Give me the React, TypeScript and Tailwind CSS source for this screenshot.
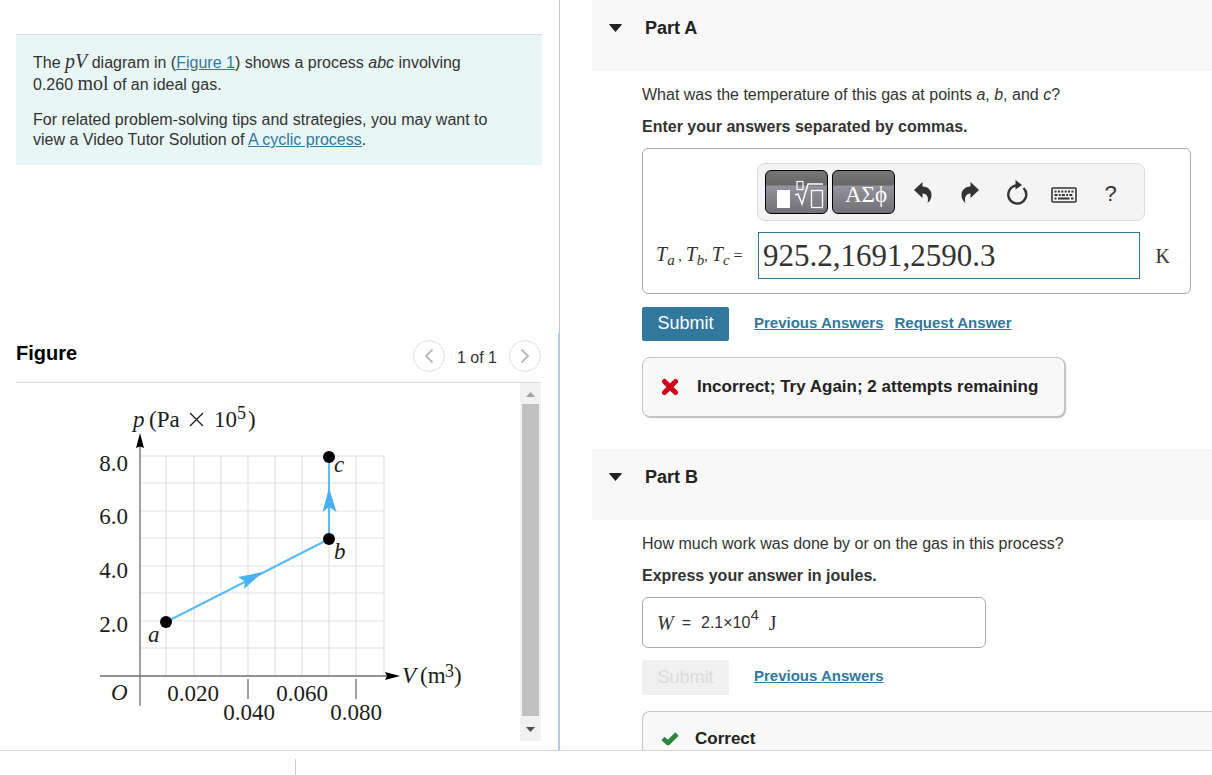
import React, { useState } from "react";
import { ChevronLeft, ChevronRight } from "lucide-react";

const gridX = [86, 114, 141, 168, 195, 222, 249, 276, 304];
const gridY = [66, 93, 121, 148, 176, 203, 231, 258];

const yLabels = [
  { text: "8.0", y: 81 },
  { text: "6.0", y: 134 },
  { text: "4.0", y: 188 },
  { text: "2.0", y: 242 },
];

const xLabels = [
  { text: "0.020", x: 113, y: 311 },
  { text: "0.040", x: 169, y: 330 },
  { text: "0.060", x: 222, y: 311 },
  { text: "0.080", x: 276, y: 330 },
];

function PvDiagram() {
  return (
    <svg
      width="400"
      height="350"
      viewBox="0 0 400 350"
      role="img"
      aria-label="pV diagram of process abc"
      className="block shrink-0 font-['Liberation_Serif',serif] text-[23px]"
      fill="#1c1c1c"
    >
      <g stroke="#e2e2e2" strokeWidth="1.2">
        {gridX.map((x) => (
          <line key={x} x1={x} x2={x} y1="66" y2="286" />
        ))}
        {gridY.map((y) => (
          <line key={y} x1="60" x2="304" y1={y} y2={y} />
        ))}
      </g>

      {/* axes */}
      <g stroke="#6e6e6e" strokeWidth="1.3">
        <line x1="60" x2="60" y1="50" y2="316" />
        <line x1="20" x2="308" y1="286" y2="286" />
        <line x1="168" x2="168" y1="289" y2="309" />
        <line x1="276" x2="276" y1="289" y2="309" />
      </g>
      <path d="M60 43 L64 58 L60 56.5 L56 58 Z" fill="#000" />
      <path d="M320 286 L305 290 L307 286 L305 282 Z" fill="#000" />

      {/* process a -> b -> c */}
      <polyline points="86,232 249,149 249,67" fill="none" stroke="#5bbdf2" strokeWidth="2.2" />
      <path d="M183 182 L164 199 L165 191.5 L158 187 Z" fill="#48b0ee" />
      <path d="M249 98 L256.5 122 L249 117 L242.5 122 Z" fill="#48b0ee" />
      <circle cx="86" cy="232" r="6" fill="#000" />
      <circle cx="249" cy="149" r="6" fill="#000" />
      <circle cx="249" cy="67" r="6" fill="#000" />

      {yLabels.map((l) => (
        <text key={l.text} x="48" y={l.y} textAnchor="end">{l.text}</text>
      ))}
      {xLabels.map((l) => (
        <text key={l.text} x={l.x} y={l.y} textAnchor="middle">{l.text}</text>
      ))}
      <g fontStyle="italic">
        <text x="53" y="37">p</text>
        <text x="68" y="252">a</text>
        <text x="254" y="169">b</text>
        <text x="254" y="82">c</text>
        <text x="31" y="310">O</text>
        <text x="322" y="293">V</text>
      </g>
      <text x="69" y="37">(Pa</text>
      <path d="M110 23 L123 36 M123 23 L110 36" stroke="#1c1c1c" strokeWidth="1.3" />
      <text x="134" y="37">10</text>
      <text x="157" y="29" fontSize="18">5</text>
      <text x="168" y="37">)</text>
      <text x="340" y="293">(m</text>
      <text x="365" y="287" fontSize="18">3</text>
      <text x="374" y="293">)</text>
    </svg>
  );
}

function UndoIcon({ flip = false }: { flip?: boolean }) {
  return (
    <svg width="18" height="21" viewBox="0 0 18 21" className={flip ? "-scale-x-100" : ""} fill="#333">
      <path d="M0 8 L8.5 0 V4.5 C14.5 4.7 17.5 8.5 17.5 13 C17.5 16.5 16 19 13.5 21 C14.8 16 13.5 11.5 8.5 11.5 V16 Z" />
    </svg>
  );
}

function ResetIcon() {
  return (
    <svg width="22" height="25" viewBox="0 0 22 25">
      <path d="M11 5.5 A9 9 0 1 0 17.5 8" fill="none" stroke="#333" strokeWidth="2.4" />
      <path d="M9.5 0 L16 5 L9.5 9.5 Z" fill="#333" />
    </svg>
  );
}

function KeyboardIcon() {
  return (
    <svg width="26" height="16" viewBox="0 0 26 16" fill="none" stroke="#333">
      <rect x="1" y="1" width="24" height="14" rx="1" strokeWidth="1.6" />
      <path d="M3.5 4.5 H22.5" strokeWidth="2" strokeDasharray="2 1.4" />
      <path d="M3.5 8 H22.5" strokeWidth="2" strokeDasharray="3 1.3 1.8 1.3" />
      <path d="M3.5 11.5 H5.500 M7 11.5 H18.5 M20 11.5 H22.5" strokeWidth="2" />
    </svg>
  );
}

function TemplatesIcon() {
  return (
    <svg width="48" height="30" viewBox="0 0 48 30" fill="none" stroke="#fff">
      <rect x="1" y="10" width="13" height="18" fill="#fff" stroke="none" />
      <rect x="21" y="1.5" width="6" height="8" strokeWidth="1.2" />
      <path d="M19 15 L22 14 L26 24 L32 4 H47" strokeWidth="1.5" />
      <rect x="35.5" y="10.5" width="11" height="17" strokeWidth="1.3" />
    </svg>
  );
}

function PartHeader({ title, open, onToggle }: { title: string; open: boolean; onToggle: () => void }) {
  return (
    <header className="h-[71px] bg-[#f8f8f8] pl-4 pt-4">
      <button
        type="button"
        aria-expanded={open}
        onClick={onToggle}
        className="flex items-center gap-[22px] text-[18px] leading-6 font-bold text-[#222]"
      >
        <svg width="15" height="8" viewBox="0 0 15 8" fill="#222" className={open ? "" : "-rotate-90"}>
          <path d="M1 0.5 Q1 0 2 0 H13 Q14 0 14 0.5 L7.5 8 Z" />
        </svg>
        {title}
      </button>
    </header>
  );
}

const linkClass = "pb-[2px] text-[15px] font-bold text-[#32789c] underline";
const mathClass = "font-['Liberation_Serif',serif] text-[20px] leading-none";
const toolClass = "flex h-8 w-[47px] items-center justify-center";
const darkToolClass =
  "flex h-[44px] w-[63px] items-center justify-end rounded-md border border-black bg-[linear-gradient(#767676_0%,#666_34%,#94929c_35%,#727176_100%)] text-white";

export default function App() {
  const [openA, setOpenA] = useState(true);
  const [openB, setOpenB] = useState(true);
  const [answer, setAnswer] = useState("925.2,1691,2590.3");

  return (
    <div className="flex h-screen flex-col overflow-hidden bg-white font-['Liberation_Sans',Arial,sans-serif] text-[16px] text-[#333]">
      <main className="grid min-h-0 flex-1 grid-cols-[140fr_163fr]">
        {/* left: problem statement and figure */}
        <div className="grid min-h-0 grid-rows-[333fr_417fr]">
          <section className="border-r border-[#c0c6d4] pl-4 pr-[17px] pt-[34px]">
            <div className="border-t border-[#dcdcdc] bg-[#e8f6f6] px-[17px] pb-[15px] pt-4">
              <p className="leading-[21px]">
                The <i className={mathClass}>pV</i>
                {"  "}diagram in (<a href="#figure" className="text-[#32789c] underline">Figure 1</a>) shows a process <i>abc</i> involving
                <br />
                0.260 <span className={mathClass}>mol</span> of an ideal gas.
              </p>
              <p className="mt-[15px] pr-6 leading-5">
                For related problem-solving tips and strategies, you may want to
                <br />
                view a Video Tutor Solution of <a href="#tutor" className="text-[#32789c] underline">A cyclic process</a>.
              </p>
            </div>
          </section>

          <section id="figure" className="flex min-h-0 flex-col border-r-2 border-[#b9cbe2] pb-[9px] pl-4 pr-[17px]">
            <div className="flex h-[50px] shrink-0 items-center justify-between border-b border-[#dcdcdc]">
              <h2 className="pb-[10px] text-[20px] font-bold text-black">Figure</h2>
              <div className="flex items-center gap-3 pb-1">
                <button type="button" aria-label="Previous figure" className="flex size-8 items-center justify-center rounded-full border border-[#e2e2e2] text-[#bbb]">
                  <ChevronLeft size={24} />
                </button>
                <span className="pt-[5px]">1 of 1</span>
                <button type="button" aria-label="Next figure" className="flex size-8 items-center justify-center rounded-full border border-[#e2e2e2] text-[#bbb]">
                  <ChevronRight size={24} />
                </button>
              </div>
            </div>
            <div className="flex min-h-0 flex-1">
              <div className="flex-1 overflow-hidden pl-16 pt-[7px]">
                <PvDiagram />
              </div>
              <div className="flex w-[21px] flex-col items-center bg-[#f1f1f1]">
                <svg width="9" height="21" viewBox="0 0 9 21" fill="#a3a3a3" className="shrink-0">
                  <path d="M0 14 L4.5 9 L9 14 Z" />
                </svg>
                <div className="w-[17px] flex-1 bg-[#c1c1c1]" />
                <svg width="9" height="25" viewBox="0 0 9 25" fill="#505050" className="shrink-0">
                  <path d="M0 11 L4.5 16 L9 11 Z" />
                </svg>
              </div>
            </div>
          </section>
        </div>

        {/* right: questions */}
        <div className="min-h-0 overflow-hidden pl-8">
          <section>
            <PartHeader title="Part A" open={openA} onToggle={() => setOpenA(!openA)} />
            {openA && (
              <div className="pb-8 pl-[50px] pr-[21px] pt-[14px]">
                <p className="leading-5">
                  What was the temperature of this gas at points <i>a</i>, <i>b</i>, and <i>c</i>?
                </p>
                <p className="mt-3 leading-5 font-bold">Enter your answers separated by commas.</p>
                <div className="mt-[11px] rounded-md border border-[#aaa] pb-[14px] pl-[13px] pr-[20px] pt-[14px]">
                  <div className="ml-[101px] mr-[25px] flex h-[58px] items-center rounded-lg border border-[#dcdcdc] bg-[#f4f4f4] pl-[7px]">
                    <div className="mr-1 flex gap-1">
                      <button type="button" aria-label="Templates" className={darkToolClass + " pr-[3px] pt-[6px]"}>
                        <TemplatesIcon />
                      </button>
                      <button type="button" className={darkToolClass + " pr-[7px] pt-[6px] font-['Liberation_Serif',serif] text-[23px]"}>
                        ΑΣϕ
                      </button>
                    </div>
                    <button type="button" aria-label="Undo" className={toolClass}><UndoIcon /></button>
                    <button type="button" aria-label="Redo" className={toolClass}><UndoIcon flip /></button>
                    <button type="button" aria-label="Reset" className={toolClass}><ResetIcon /></button>
                    <button type="button" aria-label="Keyboard shortcuts" className={toolClass + " pt-[6px]"}><KeyboardIcon /></button>
                    <button type="button" className={toolClass + " pt-[2px] text-[22px]"}>?</button>
                  </div>
                  <div className="mt-[11px] flex items-center">
                    <label htmlFor="temps" className="flex w-[102px] shrink-0 items-baseline gap-1 font-['Liberation_Serif',serif] text-[20px] leading-6">
                      <span>
                        <i>T<sub className="text-[15px]">a</sub></i>
                        <span className="text-[14px]"> ,</span>
                      </span>
                      <span>
                        <i>T<sub className="text-[15px]">b</sub></i>
                        <span className="text-[14px]">,</span>
                      </span>
                      <i>T<sub className="text-[15px]">c</sub></i>
                      <span className="text-[16px]">=</span>
                    </label>
                    <input
                      id="temps"
                      value={answer}
                      onChange={(e) => setAnswer(e.target.value)}
                      className="h-[47px] min-w-0 flex-1 border border-[#32789c] px-1 font-['Liberation_Serif',serif] text-[31px] outline-none"
                    />
                    <span className={mathClass + " ml-4"}>K</span>
                  </div>
                </div>
                <div className="mt-[13px] flex items-center">
                  <button type="button" className="h-[34px] w-[87px] rounded-xs bg-[#32789c] pb-[2px] text-[18px] text-white">Submit</button>
                  <a href="#previous-a" className={linkClass + " ml-[25px]"}>Previous Answers</a>
                  <a href="#request-a" className={linkClass + " ml-[11px]"}>Request Answer</a>
                </div>
                <div className="mt-4 flex h-[60px] w-fit items-center rounded-lg border border-[#c4c4c4] bg-[#f8f8f8] pl-[18px] pr-[26px] text-[17px] font-bold text-[#222] shadow-[1px_1px_1px_#bbb]">
                  <svg width="18" height="18" viewBox="0 0 18 18" className="mr-[18px]">
                    <path d="M3.5 3.5 L14.5 14.5 M14.5 3.5 L3.5 14.5" stroke="#d0021b" strokeWidth="5" strokeLinecap="round" />
                  </svg>
                  Incorrect; Try Again; 2 attempts remaining
                </div>
              </div>
            )}
          </section>

          <section>
            <PartHeader title="Part B" open={openB} onToggle={() => setOpenB(!openB)} />
            {openB && (
              <div className="pl-[50px] pt-[14px]">
                <p className="leading-5">How much work was done by or on the gas in this process?</p>
                <p className="mt-3 leading-5 font-bold">Express your answer in joules.</p>
                <div className="mt-[11px] flex h-[51px] w-[344px] items-center rounded-md border border-[#aaa] pl-[14px]">
                  <i className={mathClass}>W</i>
                  <span className="ml-2">=</span>
                  <span className="ml-[10px]">
                    2.1×10<sup className="text-[15px]">4</sup>
                  </span>
                  <span className={mathClass + " ml-[10px]"}>J</span>
                </div>
                <div className="mt-3 flex items-center">
                  <button type="button" disabled className="h-[35px] w-[87px] rounded-xs bg-[#f0f0f0] text-[18px] text-[#dcdcdc]">Submit</button>
                  <a href="#previous-b" className={linkClass + " ml-[25px]"}>Previous Answers</a>
                </div>
                <div className="mt-4 flex h-[60px] items-center rounded-tl-lg border-l border-t border-[#c4c4c4] bg-[#f8f8f8] pb-[6px] pl-[18px] text-[17px] font-bold text-[#222]">
                  <svg width="18" height="14" viewBox="0 0 18 14" className="mr-4">
                    <path d="M2 6.5 L7 11 L16 2" fill="none" stroke="#2e8540" strokeWidth="4.6" strokeLinejoin="round" />
                  </svg>
                  Correct
                </div>
              </div>
            )}
          </section>
        </div>
      </main>

      <footer className="flex h-[25px] shrink-0 border-t border-[#d4d4d4] pt-2">
        <div className="w-[296px] border-r border-[#ccc]" />
      </footer>
    </div>
  );
}
